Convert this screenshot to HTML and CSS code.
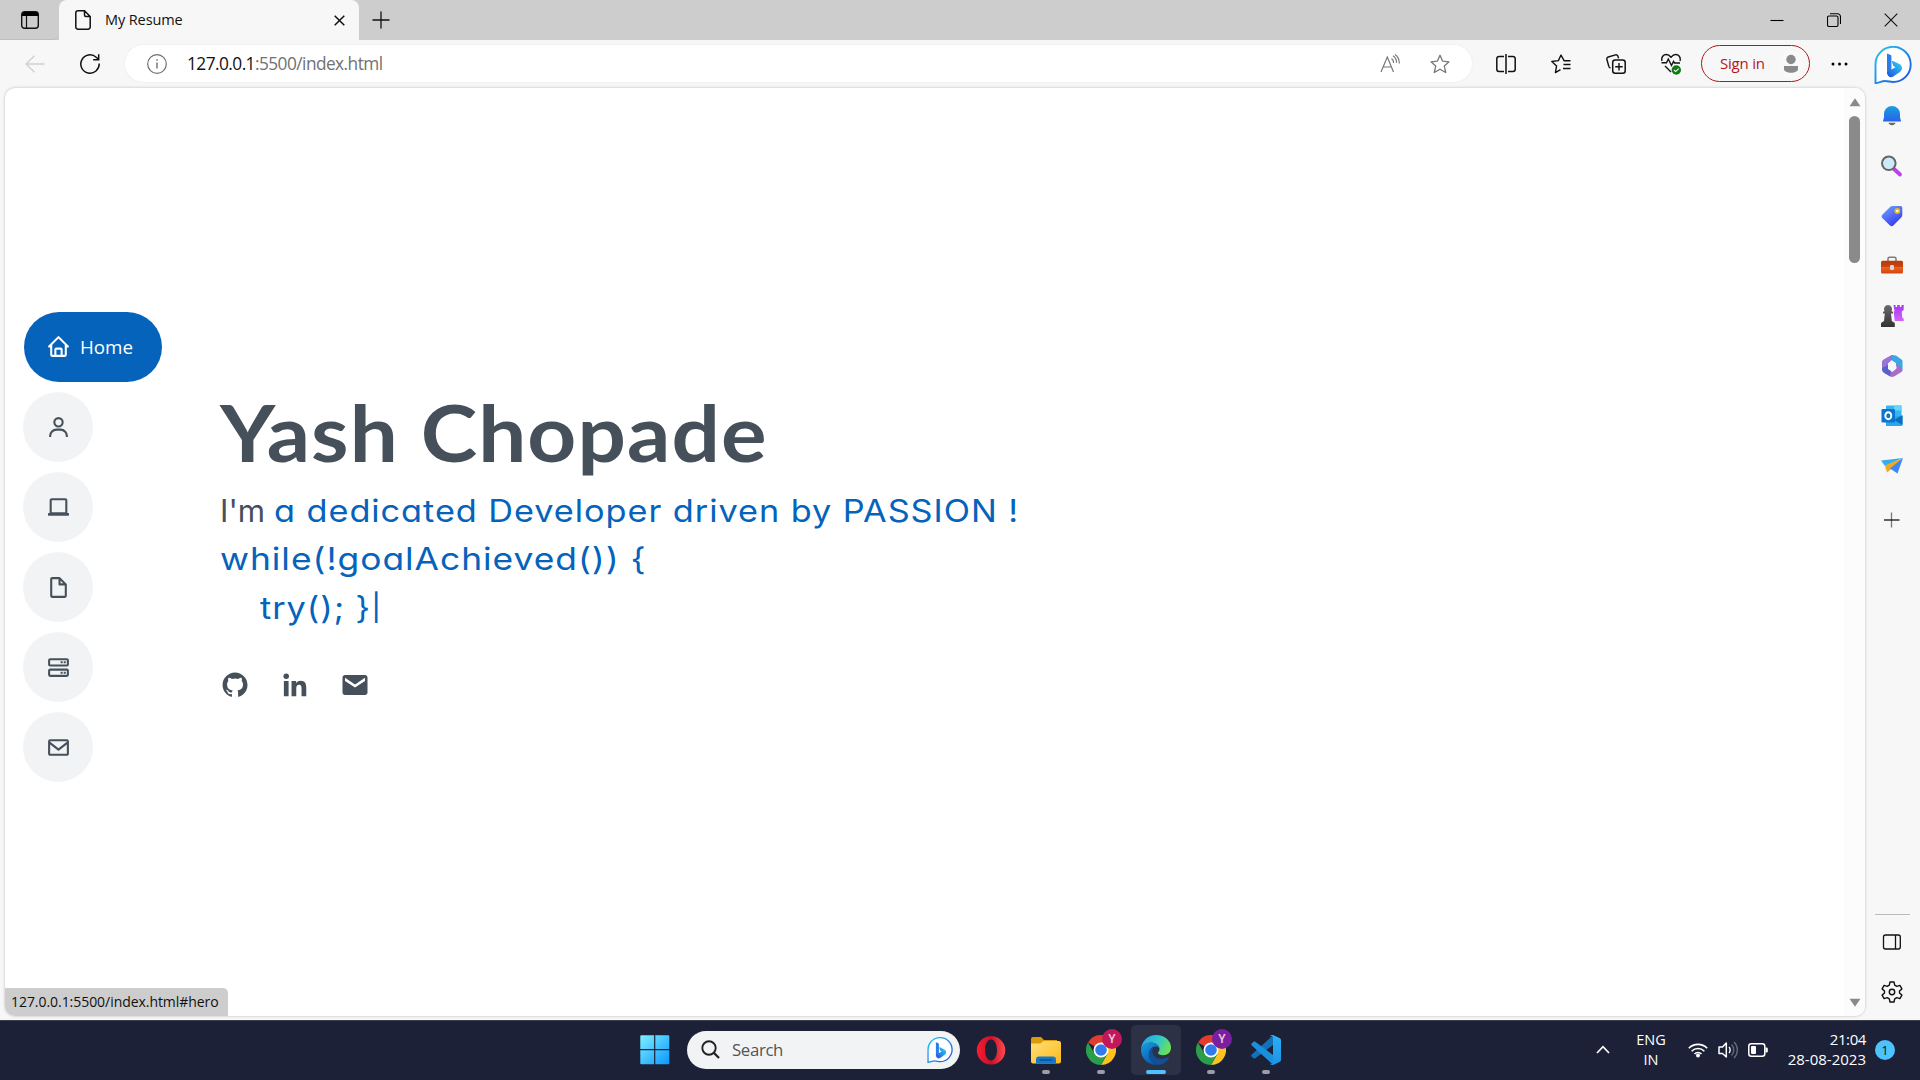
FILE: index.html
```html
<!DOCTYPE html>
<html lang="en">
<head>
<meta charset="utf-8">
<title>My Resume</title>
<link rel="stylesheet" href="styles.css">
</head>
<body>
<svg class="defs" width="0" height="0" aria-hidden="true">
  <defs>
    <linearGradient id="gBing" x1="0" y1="0" x2="1" y2="1"><stop offset="0" stop-color="#23c8f5"/><stop offset="1" stop-color="#1d4fd8"/></linearGradient>
    <linearGradient id="gBingB" x1="1" y1="0" x2="0" y2="1"><stop offset="0" stop-color="#35d6f0"/><stop offset="1" stop-color="#1d4fe0"/></linearGradient>
    <linearGradient id="gBell" x1="0" y1="0" x2="0" y2="1"><stop offset="0" stop-color="#18a0e0"/><stop offset="1" stop-color="#2a62ea"/></linearGradient>
    <linearGradient id="gTag" x1="0" y1="0" x2="0.6" y2="1"><stop offset="0" stop-color="#6fa8ff"/><stop offset="1" stop-color="#3a3cf0"/></linearGradient>
    <linearGradient id="gBox" x1="0" y1="0" x2="0" y2="1"><stop offset="0" stop-color="#b93a0c"/><stop offset="0.45" stop-color="#c8430f"/><stop offset="0.5" stop-color="#f0641e"/><stop offset="1" stop-color="#d04510"/></linearGradient>
    <linearGradient id="gPawn" x1="0" y1="0" x2="0" y2="1"><stop offset="0" stop-color="#6a6a6a"/><stop offset="1" stop-color="#333"/></linearGradient>
    <linearGradient id="gRook" x1="0" y1="0" x2="0" y2="1"><stop offset="0" stop-color="#a738ee"/><stop offset="1" stop-color="#d264fa"/></linearGradient>
    <linearGradient id="gWin" x1="0" y1="0" x2="1" y2="1"><stop offset="0" stop-color="#7ff0ff"/><stop offset="1" stop-color="#0a96ff"/></linearGradient>
    <linearGradient id="gOpera" x1="0" y1="0" x2="1" y2="0"><stop offset="0" stop-color="#ff1b2d"/><stop offset="0.5" stop-color="#c8102a"/><stop offset="1" stop-color="#ff4b4b"/></linearGradient>
    <linearGradient id="gFolder" x1="0" y1="0" x2="1" y2="1"><stop offset="0" stop-color="#ffe07a"/><stop offset="1" stop-color="#fdb91a"/></linearGradient>
    <linearGradient id="gEdgeTop" x1="0" y1="0.2" x2="1" y2="0.6"><stop offset="0" stop-color="#1fa4e6"/><stop offset="0.5" stop-color="#2fc5d0"/><stop offset="1" stop-color="#6de34f"/></linearGradient>
    <linearGradient id="gEdgeLow" x1="0" y1="0" x2="0.6" y2="1"><stop offset="0" stop-color="#1b9de2"/><stop offset="1" stop-color="#0a55a8"/></linearGradient>
    <linearGradient id="gCode" x1="0" y1="0" x2="0" y2="1"><stop offset="0" stop-color="#2bb0f5"/><stop offset="1" stop-color="#1b93e6"/></linearGradient>
    <symbol id="bing" viewBox="0 0 38 38">
      <path d="M1.500 37V19A17.600 17.600 0 1 1 19 36c-3 0-4.600-1-8-1-4 0-6 2-9.500 2z" fill="#fff" stroke="url(#gBing)" stroke-width="1.900"/>
      <path d="M13 7.500l3.200 1.300c.8.300 1.200.8 1.200 1.600v15.100l-4.400 2.800z" fill="#2a7de8"/>
      <path d="M13 26l4.400-2.500 4.200-2.300-2.200-1.200-1.500-4c-.3-.8.200-1.200 1-.9l6 2.700c4 2 4 6 1 8.300l-6.600 4.500c-3 1.800-6.300-.2-6.300-4.600z" fill="url(#gBingB)"/>
    </symbol>
    <symbol id="chrome" viewBox="0 0 30 30">
      <path d="M15 15L2 7.500A15 15 0 0 1 28 7.500z" fill="#e33b2e"/>
      <path d="M15 7.500H28A15 15 0 0 1 15 30L21.500 18.700z" fill="#fcc31e"/>
      <path d="M8.500 18.700L2 7.500A15 15 0 0 0 15 30l6.500-11.300z" fill="#2b9e4b"/>
      <circle cx="15" cy="15" r="7.500" fill="#fff"/><circle cx="15" cy="15" r="5.800" fill="#2f7bee"/>
    </symbol>
  </defs>
</svg>

<header class="tabstrip">
  <div class="tab-actions">
    <svg width="18" height="18" viewBox="0 0 18 18"><rect x=".7" y=".7" width="16.600" height="16.600" rx="2.800" fill="none" stroke="#111" stroke-width="1.400"/><path d="M1 5V3a2 2 0 0 1 2-2h12a2 2 0 0 1 2 2v2z"/><path d="M5.500 5v12" stroke="#111" stroke-width="1.200"/></svg>
  </div>
  <div class="tab">
    <svg width="16" height="20" viewBox="0 0 16 20"><path d="M3 .8h6.500l5.700 5.700V17a2.200 2.200 0 0 1-2.200 2.200H3A2.200 2.200 0 0 1 .8 17V3A2.200 2.200 0 0 1 3 .8zM9.500 1v4a1.500 1.500 0 0 0 1.500 1.500h4" fill="none" stroke="#111" stroke-width="1.500"/></svg>
    <span class="tab-title">My Resume</span>
    <svg width="11" height="11" viewBox="0 0 11 11"><path d="M.7.7l9.600 9.600M10.300.7L.7 10.300" stroke="#111" stroke-width="1.500"/></svg>
  </div>
  <svg class="new-tab" width="18" height="18" viewBox="0 0 18 18"><path d="M9 .5v17M.5 9h17" stroke="#111" stroke-width="1.300"/></svg>
  <div class="window-buttons">
    <svg width="14" height="14" viewBox="0 0 14 14"><path d="M.5 7.500h13" stroke="#000" stroke-width="1.100"/></svg>
    <svg width="14" height="14" viewBox="0 0 14 14"><path d="M2 3h7.500a1.500 1.500 0 0 1 1.500 1.500v7.500a1.500 1.500 0 0 1-1.500 1.500H2A1.500 1.500 0 0 1 .5 12V4.500A1.500 1.500 0 0 1 2 3zM3 .8h7.500a3 3 0 0 1 3 3V11" fill="none" stroke="#000" stroke-width="1.100"/></svg>
    <svg width="14" height="14" viewBox="0 0 14 14"><path d="M.7.700l12.600 12.600M13.300.7L.7 13.300" stroke="#111" stroke-width="1.100"/></svg>
  </div>
</header>

<section class="toolbar">
  <svg class="back" width="20" height="18" viewBox="0 0 20 18"><path d="M19.500 9H1M9.500.8L1 9l8.500 8.200" fill="none" stroke="#cfcfcf" stroke-width="1.300"/></svg>
  <svg class="reload" width="20" height="20" viewBox="0 0 20 20"><path d="M19.200 9.500A9.200 9.200 0 1 1 16.200 3.200L18.500 5.300M18.700.3v5.400h-5.500" fill="none" stroke="#111" stroke-width="1.500"/></svg>
  <div class="address">
    <svg width="20" height="20" viewBox="0 0 20 20"><circle cx="10" cy="10" r="9.300" fill="none" stroke="#707070" stroke-width="1.200"/><path d="M10 8.500v6M10 5.200v1.600" stroke="#707070" stroke-width="1.400"/></svg>
    <p class="url"><b>127.0.0.1</b>:5500/index.html</p>
    <svg class="read" width="20" height="20" viewBox="0 0 20 20"><path d="M1 18L7.300 3 13.500 18M3.200 13h8.200M11.500 4.500c1.500 1 2.200 2.800 2.200 4.500M13 1.700c2.500 1.700 3.600 4.500 3.600 7M15 .5c3 2 4.300 5.500 4.300 9" fill="none" stroke="#777" stroke-width="1.200"/></svg>
    <svg class="star" width="20" height="20" viewBox="0 0 20 20"><path d="M10 1.300l2.600 5.800 6.400.7-4.700 4.300 1.400 6.400-5.700-3.300-5.700 3.300 1.400-6.400L1 7.800l6.400-.7z" fill="none" stroke="#777" stroke-width="1.300" stroke-linejoin="round"/></svg>
  </div>
  <div class="tools">
    <svg width="20" height="20" viewBox="0 0 20 20"><path d="M8 2.500H3A2.200 2.200 0 0 0 .8 4.700v10.600A2.200 2.200 0 0 0 3 17.500h5M12 2.500h5a2.200 2.200 0 0 1 2.200 2.200v10.600a2.200 2.200 0 0 1-2.200 2.200h-5M10 0v20" fill="none" stroke="#111" stroke-width="1.500"/></svg>
    <svg width="20" height="20" viewBox="0 0 20 20"><path d="M19.500 6.800h-6.300L10 1 7.400 6.600l-6.600.9 4.800 4.400-1.200 6.700 5.100-3M12.500 10.500h7M12 14.500h7.500" fill="none" stroke="#111" stroke-width="1.400" stroke-linejoin="round"/></svg>
    <svg width="20" height="20" viewBox="0 0 20 20"><path d="M4.500 14A2.500 2.500 0 0 1 2.700 12L.9 5.500A2 2 0 0 1 2.300 3L9.500.9A2 2 0 0 1 12 2.300l.5 2" fill="none" stroke="#111" stroke-width="1.400"/><rect x="6.700" y="6" width="12.500" height="13.200" rx="2.500" fill="none" stroke="#111" stroke-width="1.500"/><path d="M13 9v7.500M9.200 12.700h7.500" stroke="#111" stroke-width="1.400"/></svg>
    <svg width="20" height="22" viewBox="0 0 20 22"><path d="M1 8C0 4 2.500 1.500 5.300 1.500 7.500 1.500 9 3 10 4.200c1-1.200 2.500-2.700 4.700-2.700C17.500 1.500 20 4 19 8M.5 9.800h5L7.300 6l3.200 6.500 2-4 1 1.500h5.500M4 13l6 6" fill="none" stroke="#111" stroke-width="1.400"/><circle cx="15.300" cy="17" r="4.700" fill="#107c10"/><path d="M13 17l1.700 1.600 3-3" fill="none" stroke="#fff" stroke-width="1.100"/></svg>
  </div>
  <div class="signin"><span class="signin-label">Sign in</span>
    <svg width="26" height="32" viewBox="0 0 26 32"><ellipse cx="13" cy="16" rx="12.500" ry="14" fill="#f9f9f9"/><circle cx="13" cy="11.500" r="4.700" fill="#8a8a8a"/><path d="M6 18h14v3c0 5-14 5-14 0z" fill="#8a8a8a"/></svg>
  </div>
  <svg class="dots" width="17" height="4" viewBox="0 0 17 4"><circle cx="2" cy="2" r="1.500"/><circle cx="8.500" cy="2" r="1.500"/><circle cx="15" cy="2" r="1.500"/></svg>
  <svg class="bing" width="38" height="38"><use href="#bing"/></svg>
</section>

<section class="workspace">
  <main class="page">
    <div class="viewport">
      <nav class="menu">
        <a class="item active"><svg width="25" height="25" viewBox="0 0 24 24"><path d="M3 13h1v7c0 1.103.897 2 2 2h12c1.103 0 2-.897 2-2v-7h1a1 1 0 0 0 .707-1.707l-9-9a.999.999 0 0 0-1.414 0l-9 9A1 1 0 0 0 3 13zm7 7v-5h4v5h-4zm2-15.586 6 6V15l.001 5H16v-5c0-1.103-.897-2-2-2h-4c-1.103 0-2 .897-2 2v5H6v-9.586l6-6z"/></svg><span>Home</span></a>
        <a class="item"><svg width="25" height="25" viewBox="0 0 24 24"><path d="M12 2a5 5 0 1 0 5 5 5 5 0 0 0-5-5zm0 8a3 3 0 1 1 3-3 3 3 0 0 1-3 3zm9 11v-1a7 7 0 0 0-7-7h-4a7 7 0 0 0-7 7v1h2v-1a5 5 0 0 1 5-5h4a5 5 0 0 1 5 5v1z"/></svg></a>
        <a class="item"><svg width="25" height="25" viewBox="0 0 24 24"><path d="M20.500 17.300V5c0-1.100-.9-2-2-2h-13c-1.100 0-2 .9-2 2v12.300H2V20h20v-2.700zM5.500 5h13v11.500h-13z"/></svg></a>
        <a class="item"><svg width="25" height="25" viewBox="0 0 24 24"><path d="M19.937 8.680c-.011-.032-.02-.063-.033-.094a.997.997 0 0 0-.196-.293l-6-6a.997.997 0 0 0-.293-.196c-.03-.014-.062-.022-.094-.033a.991.991 0 0 0-.259-.051C13.040 2.011 13.021 2 13 2H6c-1.103 0-2 .897-2 2v16c0 1.103.897 2 2 2h12c1.103 0 2-.897 2-2V9c0-.021-.011-.040-.013-.062a.990.990 0 0 0-.050-.258zM16.586 8H14V5.414L16.586 8zM6 20V4h6v5a1 1 0 0 0 1 1h5l.002 10H6z"/></svg></a>
        <a class="item"><svg width="25" height="25" viewBox="0 0 24 24"><path d="M20 3H4a2 2 0 0 0-2 2v4a2 2 0 0 0 2 2h16a2 2 0 0 0 2-2V5a2 2 0 0 0-2-2zM4 9V5h16v4zM20 13H4a2 2 0 0 0-2 2v4a2 2 0 0 0 2 2h16a2 2 0 0 0 2-2v-4a2 2 0 0 0-2-2zM4 19v-4h16v4zM17 6h2v2h-2zM14 6h2v2h-2zM17 16h2v2h-2zM14 16h2v2h-2z" fill-rule="evenodd"/></svg></a>
        <a class="item"><svg width="25" height="25" viewBox="0 0 24 24"><path d="M20 4H4c-1.103 0-2 .897-2 2v12c0 1.103.897 2 2 2h16c1.103 0 2-.897 2-2V6c0-1.103-.897-2-2-2zm0 2v.511l-8 6.223-8-6.222V6h16zM4 18V9.044l7.386 5.745a.994.994 0 0 0 1.228 0L20 9.044 20.002 18H4z"/></svg></a>
      </nav>
      <div class="hero">
        <h1>Yash Chopade</h1>
        <p class="tagline first">I'm <span class="typed">a dedicated Developer driven by PASSION !</span></p>
        <p class="tagline"><span class="typed code">while(!goalAchieved()) {</span></p>
        <p class="tagline indent"><span class="typed">try(); }</span><span class="typed cursor">|</span></p>
        <div class="social">
          <svg width="30" height="30" viewBox="0 0 24 24"><path d="M12.026 2c-5.509 0-9.974 4.465-9.974 9.974 0 4.406 2.857 8.145 6.821 9.465.499.090.679-.217.679-.481 0-.237-.008-.865-.011-1.696-2.775.602-3.361-1.338-3.361-1.338-.452-1.152-1.107-1.459-1.107-1.459-.905-.619.069-.605.069-.605 1.002.070 1.527 1.028 1.527 1.028.890 1.524 2.336 1.084 2.902.829.091-.645.351-1.085.635-1.334-2.214-.251-4.542-1.107-4.542-4.930 0-1.087.389-1.979 1.024-2.675-.101-.253-.446-1.268.099-2.640 0 0 .837-.269 2.742 1.021a9.582 9.582 0 0 1 2.496-.336 9.554 9.554 0 0 1 2.496.336c1.906-1.291 2.742-1.021 2.742-1.021.545 1.372.203 2.387.099 2.640.640.696 1.024 1.587 1.024 2.675 0 3.833-2.330 4.675-4.552 4.922.355.308.675.916.675 1.846 0 1.334-.012 2.410-.012 2.737 0 .267.178.577.687.479C19.146 20.115 22 16.379 22 11.974 22 6.465 17.535 2 12.026 2z"/></svg>
          <svg width="30" height="30" viewBox="0 0 24 24"><circle cx="4.983" cy="5.009" r="2.188"/><path d="M9.237 8.855v12.139h3.769v-6.003c0-1.584.298-3.118 2.262-3.118 1.937 0 1.961 1.811 1.961 3.218v5.904H21v-6.657c0-3.270-.704-5.783-4.526-5.783-1.835 0-3.065 1.007-3.568 1.960h-.051v-1.660H9.237zm-6.142 0H6.870v12.139H3.095z"/></svg>
          <svg width="30" height="30" viewBox="0 0 24 24"><path d="M20 4H4c-1.103 0-2 .897-2 2v12c0 1.103.897 2 2 2h16c1.103 0 2-.897 2-2V6c0-1.103-.897-2-2-2zm0 4.700-8 5.334L4 8.700V6.297l8 5.333 8-5.333V8.700z"/></svg>
        </div>
      </div>
    </div>
    <div class="scrollbar">
      <svg width="12" height="9" viewBox="0 0 12 9"><path d="M6 .3L11.500 8.300H.5z" fill="#8a8a8a"/></svg>
      <i class="thumb"></i>
      <svg class="down" width="12" height="9" viewBox="0 0 12 9"><path d="M6 8.700L.5.700h11z" fill="#8a8a8a"/></svg>
    </div>
    <div class="status">127.0.0.1:5500/index.html#hero</div>
  </main>
  <aside class="sidebar">
    <svg width="24" height="24" viewBox="0 0 24 24"><path d="M3 17.500c0-2 1-2.500 1-5V10a8 8 0 0 1 16 0v2.500c0 2.500 1 3 1 5z" fill="url(#gBell)"/><path d="M8.500 18.800h7c-.5 3.200-6.500 3.200-7 0z" fill="#666"/></svg>
    <svg width="24" height="24" viewBox="0 0 24 24"><path d="M14 15l6 5.500" stroke="#c23cf0" stroke-width="3.800" stroke-linecap="round"/><circle cx="8.800" cy="9.300" r="6.800" fill="#cdeafb" stroke="#666" stroke-width="2"/></svg>
    <svg width="24" height="24" viewBox="0 0 24 24"><path d="M12.500 2h8a1.800 1.800 0 0 1 1.800 1.800V11c0 1-.3 1.700-1 2.400l-8 8c-1 1-2.300 1-3.300 0L2.300 14c-1-1-1-2.300 0-3.300l8-8c.6-.5 1.300-.7 2.200-.7z" fill="url(#gTag)"/><circle cx="17.300" cy="7" r="2.100" fill="#fff" stroke="#efb90c" stroke-width="1.600"/></svg>
    <svg width="24" height="24" viewBox="0 0 24 24"><path d="M8 7V4.700c0-1 .6-1.500 1.500-1.500h5c1 0 1.500.6 1.500 1.500V7" fill="none" stroke="#7a7a7a" stroke-width="1.500"/><rect x="1" y="6.700" width="22" height="12.800" rx="1.500" fill="url(#gBox)"/><rect x="10" y="11" width="4" height="5" rx="1.300" fill="#d8d8d8"/></svg>
    <svg width="24" height="24" viewBox="0 0 24 24"><path d="M13.500 1h2v2h1.700V1h2.600v2h1.700V1h2.200v5l-2 1.500.5 6 1.500 1.200V17h-9l-1-9 .8-1z" fill="url(#gRook)"/><path d="M4.500 7a4 4 0 1 1 7 0l1.500 1v1.500h-2l.8 7.500 3 2v4H1v-4l3-2 .8-7.500H3V8z" fill="url(#gPawn)"/></svg>
    <svg width="24" height="24" viewBox="0 0 24 24"><path d="M12 1l4 .5 5.500 4c.7.500 1 1 1 2V16L16 12V9l-4-2.500L9 4z" fill="#3aa6e4"/><path d="M22.500 15.500c0 1.500-.5 2-1.500 2.700l-6.500 4c-2 1-3 1-5 0L4 18.500l9-1 3.500-3V10z" fill="#a56fc9"/><path d="M12 1L4 5.500C2.500 6.500 2 7.500 2 9v6.500c0 2 1 2.700 3 4L10 22l1-5-3-2V9l3-2.500z" fill="#5a60c9"/><path d="M12 1L4 5.500C2.500 6.500 2 7.500 2 9v5l6-3V9l3-2.500z" fill="#9b73d6"/><path d="M12 7.700l4 2.300v4.500l-4 2.300-4-2.300V10z" fill="#f7f7f7"/></svg>
    <svg width="24" height="24" viewBox="0 0 24 24"><rect x="6" y="1.500" width="15.500" height="14" rx="1" fill="#35b5f1"/><path d="M14 1.500h7.500v5H14z" fill="#64d6fb"/><path d="M6 12h16.500v8.500a1.500 1.500 0 0 1-1.500 1.500H6z" fill="#27a8ea"/><path d="M22.500 11v10L14 16z" fill="#0f6cba"/><rect x="1.500" y="5" width="13.500" height="13.500" rx="1.300" fill="#0a74cf"/><ellipse cx="8.300" cy="11.700" rx="3" ry="3.500" fill="none" stroke="#fff" stroke-width="1.900"/></svg>
    <svg width="24" height="24" viewBox="0 0 24 24"><path d="M1 6.500L23 4 5 12z" fill="#35aef0"/><path d="M23 4L5 11.500 7 18.500z" fill="#f3a81c"/><path d="M7 18.500l4-4L23 4z" fill="#b97a12"/><path d="M23 4l-5.500 15.500L10 14.500z" fill="#3b87f5"/></svg>
    <svg class="plus" width="24" height="24" viewBox="0 0 24 24"><path d="M11.500 4.500v15" stroke="#777" stroke-width="1.300"/><path d="M4 12h15.500" stroke="#111" stroke-width="1.300"/></svg>
    <div class="sidebar-foot">
      <svg width="24" height="24" viewBox="0 0 24 24"><rect x="3.500" y="5" width="16.800" height="14" rx="2" fill="none" stroke="#111" stroke-width="1.300"/><path d="M15.500 5v14" stroke="#111" stroke-width="1.300"/></svg>
      <svg width="24" height="24" viewBox="0 0 24 24"><path d="M10 2h4l.7 3.200 2 1.200 3.200-1 2 3.500-2.400 2.200v1.800l2.400 2.200-2 3.500-3.200-1-2 1.200L14 22h-4l-.7-3.200-2-1.200-3.200 1-2-3.500L4.500 13v-2L2.100 8.900l2-3.500 3.200 1 2-1.200z" fill="none" stroke="#111" stroke-width="1.400" stroke-linejoin="round"/><circle cx="12" cy="12" r="2.700" fill="none" stroke="#111" stroke-width="1.400"/></svg>
    </div>
  </aside>
</section>

<footer class="taskbar">
  <div class="dock">
    <svg class="start" width="30" height="30" viewBox="0 0 30 30"><path d="M.3 1.300a1 1 0 0 1 1-1h12.800v13.800H.3zM15.300.3h13a1 1 0 0 1 1 1v12.800h-14zM.3 15.300h13.800v14H1.300a1 1 0 0 1-1-1zM15.300 15.300h14v13a1 1 0 0 1-1 1h-13z" fill="url(#gWin)"/></svg>
    <div class="search">
      <svg width="19" height="19" viewBox="0 0 19 19"><circle cx="8" cy="8" r="6.700" fill="none" stroke="#222" stroke-width="1.900"/><path d="M12.800 12.800l5.200 5.200" stroke="#222" stroke-width="2.300"/></svg>
      <span class="search-label">Search</span>
      <svg width="26" height="26"><use href="#bing"/></svg>
    </div>
    <div class="app"><svg width="30" height="30" viewBox="0 0 30 30"><path d="M15 1a14.300 14.300 0 1 0 .1 0zM15 4.500c3.500 0 6 4.500 6 10.500s-2.500 10.500-6 10.500S9 21 9 15 11.500 4.500 15 4.500z" fill="url(#gOpera)" fill-rule="evenodd"/></svg></div>
    <div class="app run"><svg width="30" height="30" viewBox="0 0 30 30"><path d="M0 4a2 2 0 0 1 2-2h8l3 3h13v6H0z" fill="#dc9a0a"/><path d="M0 8.500h9.500l3-2.500H28a2 2 0 0 1 2 2v18.500a2 2 0 0 1-2 2H2a2 2 0 0 1-2-2z" fill="url(#gFolder)"/><path d="M5 28.500v-4a3 3 0 0 1 3-3h14a3 3 0 0 1 3 3v4z" fill="#1478cc"/><path d="M8.500 25h13" stroke="#0b4a8c" stroke-width="1.300"/></svg></div>
    <div class="app run"><svg width="30" height="30"><use href="#chrome"/></svg><b class="badge pink">Y</b></div>
    <div class="app run current"><svg width="30" height="30" viewBox="0 0 30 30"><path d="M0 14.500C.5 6 7 0 15 0c9 0 15 6 15 12.500 0 5-3.500 7.700-8 7.700-3 0-5-1-5-2.200 0-1 1.500-1.500 1.500-4 0-3.500-3.500-6.500-8.500-6.500C4.500 7.500 1 11 0 14.500z" fill="url(#gEdgeTop)"/><path d="M0 15C.5 10.500 4.500 7.500 9.500 7.500c5.500 0 9 3 9 6.500-.5-1.500-2-2.500-4-2.500-4 0-6.500 4-6.500 8 0 5 4 9 9 10.300-1 .2-9 .2-12.500-4.300C1.500 22.500 0 19 0 15z" fill="url(#gEdgeLow)"/><path d="M8 19.500c0-4 2.500-7.500 5.500-8-2 2-2.500 4-2 6 1 4.500 5 6.500 9 6.500 3 0 5-1 6.500-1.700 1-.3 1.300.2.800 1C25.500 27.500 21 30 17 29.800c-5-1.300-9-5.300-9-10.300z" fill="#114f96"/></svg></div>
    <div class="app run"><svg width="30" height="30"><use href="#chrome"/></svg><b class="badge violet">Y</b></div>
    <div class="app run"><svg width="30" height="30" viewBox="0 0 30 30"><path d="M22 0l-4 4L.8 19.500c-.8.800-.8 1.500 0 2.200l1.700 1.500c.6.500 1.200.5 1.800 0L22 10z" fill="#1272b8"/><path d="M22 30l-4-4L.8 10.500c-.8-.8-.8-1.500 0-2.200l1.700-1.500c.6-.5 1.200-.5 1.800 0L22 20z" fill="#1a8fdc"/><path d="M22 0l6.500 3c1 .5 1.500 1.200 1.500 2.200v19.600c0 1-.5 1.700-1.500 2.200L22 30c-1.500.3-2.500-.3-3.500-1.500 2 1.500 3.500.5 3.500-1.500V3c0-2-1.500-3-3.500-1.500C19.500.3 20.500-.3 22 0z" fill="url(#gCode)"/></svg></div>
  </div>
  <div class="tray">
    <svg width="14" height="9" viewBox="0 0 14 9"><path d="M1 8l6-6.300L13 8" fill="none" stroke="#fff" stroke-width="1.700"/></svg>
    <div class="lang"><span>ENG</span><span>IN</span></div>
    <svg class="wifi" width="20" height="16" viewBox="0 0 20 16"><path d="M.8 6.200a13 13 0 0 1 18.400 0M3.600 9.200a9 9 0 0 1 12.800 0M6.500 12a5 5 0 0 1 7 0" fill="none" stroke="#fff" stroke-width="1.600"/><circle cx="10" cy="13.500" r="2" fill="#fff"/></svg>
    <svg class="vol" width="21" height="18" viewBox="0 0 21 18"><path d="M1 6h3.500L8.300 2v14L4.500 12.500H1z" fill="none" stroke="#fff" stroke-width="1.500" stroke-linejoin="round"/><path d="M11 6c1.500 1.500 1.500 4.500 0 6" fill="none" stroke="#fff" stroke-width="1.400"/><path d="M13.500 3.500c3 3 3 8 0 11M16 1c4.500 4.500 4.500 11.500 0 16" fill="none" stroke="#62677a" stroke-width="1.400"/></svg>
    <svg class="bat" width="20" height="14" viewBox="0 0 20 14"><rect x=".8" y=".8" width="16" height="12.400" rx="2.500" fill="none" stroke="#fff" stroke-width="1.500"/><rect x="3" y="3" width="5" height="8" rx="1" fill="#fff"/><path d="M17.500 4.500h1a1.300 1.300 0 0 1 1.300 1.300v2.400a1.300 1.300 0 0 1-1.300 1.300h-1z" fill="#fff"/></svg>
    <div class="clock"><span class="time">21:04</span><span>28-08-2023</span></div>
    <span class="count">1</span>
  </div>
</footer>
</body>
</html>
```
FILE: styles.css
```css
* { box-sizing: border-box; }
body { margin: 0; width: 1920px; height: 1080px; overflow: hidden; display: flex; flex-direction: column; background: #f7f7f7; font-family: "Open Sans", "Noto Sans", sans-serif; color: #111; }
svg { flex: none; display: block; }
p, h1 { margin: 0; }
.defs { position: absolute; }

.tabstrip { height: 40px; flex: none; display: flex; align-items: stretch; background: #cdcdcd; }
.tab-actions { width: 59px; display: flex; align-items: center; padding-left: 21px; border-bottom: 1px solid #bdbdbd; border-radius: 0 0 6px 0; }
.tab { width: 300px; display: flex; align-items: center; padding: 0 14px 0 16px; background: #f7f7f7; border-radius: 8px 8px 0 0; }
.tab-title { flex: 1; padding: 0 0 2px 14px; font-size: 14.500px; letter-spacing: -.1px; }
.new-tab { margin: 11px 0 0 13px; }
.window-buttons { margin-left: auto; display: flex; gap: 43px; align-items: center; padding: 0 22px 1px 0; }

.toolbar { height: 48px; flex: none; display: flex; align-items: center; padding: 0 8px 1px 25px; }
.reload { margin-left: 35px; }
.address { width: 1347px; height: 37px; margin: 0 0 0 25px; padding: 0 22px 0 22px; display: flex; align-items: center; background: #fff; border-radius: 19px; box-shadow: 0 0 3px rgba(0, 0, 0, .06); }
.url { flex: 1; padding: 0 0 1px 20px; font-size: 17.300px; letter-spacing: -.55px; color: #717171; }
.url b { font-weight: 400; color: #111; }
.star { margin-left: 30px; }
.tools { display: flex; align-items: center; gap: 35px; margin-left: 24px; }
.signin { width: 109px; height: 37px; margin: 0 0 0 20px; padding: 0 5px 0 18px; display: flex; align-items: center; justify-content: space-between; border: 1.500px solid #b3151b; border-radius: 19px; color: #b3151b; font-size: 15px; }
.signin-label { padding-bottom: 2px; letter-spacing: -.2px; }
.dots { margin-left: 21px; }
.bing { margin: 2px 0 0 auto; }

.workspace { height: 932px; flex: none; display: flex; }
.page { position: relative; width: 1860px; height: 928px; margin-left: 5px; display: flex; background: #fff; border-radius: 10px; box-shadow: 0 0 3px rgba(0, 0, 0, .25); overflow: hidden; }
.viewport { flex: 1; display: flex; align-items: flex-start; }
.menu { width: 215px; padding: 224px 0 0 18px; display: flex; flex-direction: column; gap: 10px; }
.item { width: 70px; height: 70px; display: flex; align-items: center; justify-content: center; border-radius: 35px; background: #f2f3f5; fill: #45505b; }
.item.active { width: 138px; margin-left: 1px; justify-content: flex-start; padding: 0 0 1px 22px; gap: 9px; background: #0563bb; color: #fff; fill: #fff; font-size: 18.750px; }
.hero { padding-top: 297px; color: #45505b; }
h1 { height: 101px; line-height: 93px; font-family: Lato, sans-serif; font-weight: 700; font-size: 79px; letter-spacing: 1px; white-space: nowrap; transform: scaleX(1.080); transform-origin: left; }
.tagline { height: 48.750px; line-height: 48.750px; font-family: Inter, sans-serif; font-size: 31.200px; white-space: pre; font-feature-settings: "cv11"; }
.first { line-height: 50px; }
.indent { padding-left: 40px; }
.typed { display: inline-block; color: #0563bb; letter-spacing: .85px; transform: scaleX(1.100); transform-origin: left; }
.code { letter-spacing: .85px; transform: scaleX(1.135); }
.cursor { margin-left: 10px; transform: scaleY(.85); }
.social { display: flex; gap: 30px; margin-top: 38px; fill: #45505b; }
.scrollbar { width: 21px; background: #fcfcfc; display: flex; flex-direction: column; align-items: center; padding: 10px 0 9px; }
.thumb { width: 11px; height: 147px; margin-top: 9px; border-radius: 6px; background: #8a8a8a; }
.down { margin-top: auto; }
.status { position: absolute; left: 0; bottom: 0; width: 223px; height: 28px; padding-left: 6px; line-height: 27px; font-size: 14px; letter-spacing: -.05px; background: #cdcdcd; border-top-right-radius: 5px; white-space: nowrap; }
.sidebar { flex: 1; display: flex; flex-direction: column; align-items: center; gap: 26px; padding: 16px 1px 16px 0; }
.plus { margin-top: 4px; }
.sidebar-foot { width: 35px; margin-top: auto; display: flex; flex-direction: column; align-items: center; gap: 26px; padding-top: 15px; border-top: 1px solid #bbb; }

.taskbar { height: 60px; flex: none; display: flex; align-items: center; padding-bottom: 2px; background: #1c2138; border-top: 1px solid #3a3f50; color: #fff; }
.dock { display: flex; align-items: center; margin-left: 640px; }
.search { width: 273px; height: 38px; margin: 0 6px 0 17px; padding: 0 7px 0 14px; display: flex; align-items: center; border-radius: 19px; background: #f2f3f5; color: #555; }
.search-label { flex: 1; padding-left: 12px; font-size: 16.800px; letter-spacing: -.35px; }
.app { position: relative; width: 50px; height: 50px; margin-right: 5px; display: flex; align-items: center; justify-content: center; border-radius: 5px; }
.app.run::after { content: ""; position: absolute; left: 21px; bottom: 1px; width: 8px; height: 4px; border-radius: 2px; background: #9a9ca6; }
.app.current { background: #2c3146; }
.app.current::after { left: 15px; width: 20px; background: #4cc2ff; }
.badge { position: absolute; left: 26px; top: 4px; width: 20px; height: 20px; border-radius: 50%; font: 500 12px/20px Roboto, sans-serif; text-align: center; color: #f3c8d8; }
.pink { background: #c2185b; }
.violet { background: #7b1fa2; }
.tray { margin-left: auto; display: flex; align-items: center; padding-right: 25px; }
.lang { width: 42px; margin-left: 20px; display: flex; flex-direction: column; align-items: center; font-size: 14.500px; line-height: 20px; }
.wifi { margin-left: 16px; }
.vol { margin-left: 10px; }
.bat { margin-left: 9px; }
.clock { width: 98px; padding-bottom: 1px; display: flex; flex-direction: column; align-items: flex-end; font-size: 15px; line-height: 20px; }
.time { letter-spacing: -.4px; }
.count { width: 20px; height: 20px; margin-left: 9px; border-radius: 50%; background: #4cc2ff; color: #111; font-size: 13px; line-height: 20px; text-align: center; }
```
